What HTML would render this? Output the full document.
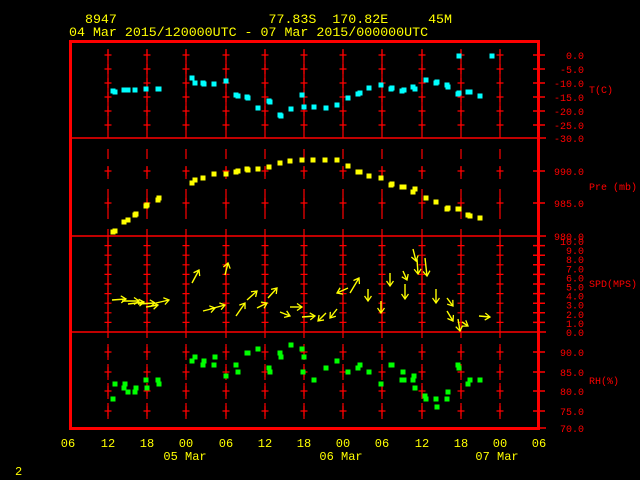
<!DOCTYPE html>
<html><head><style>
html,body{margin:0;padding:0;background:#000;width:640px;height:480px;overflow:hidden}
svg{display:block}
text{font-family:"Liberation Mono",monospace;}
</style></head><body>
<svg width="640" height="480" viewBox="0 0 640 480" xmlns="http://www.w3.org/2000/svg">
<defs>
<path id="c" d="M-3.5 0H3.5M0 -5V5" stroke="#f00" stroke-width="1.2" fill="none"/>
<path id="vcol" stroke="#f00" stroke-width="1.2" fill="none" d="M0 49V138 M0 149V159M0 167V179M0 189V219M0 229V332 M0 332V338M0 344V360M0 364V380M0 383V399M0 403V419"/>
<rect id="pc" x="-2.5" y="-2.5" width="5" height="5" fill="#0ff"/>
<rect id="py" x="-2.5" y="-2.5" width="5" height="5" fill="#ff0"/>
<rect id="pg" x="-2.5" y="-2.5" width="5" height="5" fill="#0f0"/>
<marker id="ah" markerWidth="8" markerHeight="8" refX="6" refY="4" orient="auto" markerUnits="userSpaceOnUse"><path d="M1 0.5L6 4L1 7.5" stroke="#ff0" stroke-width="1.3" fill="none"/></marker>
<g id="crosscol">
<use href="#c" y="55"/><use href="#c" y="69"/><use href="#c" y="83"/><use href="#c" y="97"/><use href="#c" y="111"/><use href="#c" y="125"/>
<use href="#c" y="171"/><use href="#c" y="203"/>
<use href="#c" y="245.6"/><use href="#c" y="255.2"/><use href="#c" y="264.8"/><use href="#c" y="274.4"/><use href="#c" y="284"/><use href="#c" y="293.6"/><use href="#c" y="303.2"/><use href="#c" y="312.8"/><use href="#c" y="322.4"/>
<use href="#c" y="352"/><use href="#c" y="372"/><use href="#c" y="391"/><use href="#c" y="411"/>
</g>
</defs>
<g fill="#ff0" font-size="13.3">
<text x="69" y="23" xml:space="preserve">  8947                   77.83S  170.82E     45M</text>
<text x="69" y="36" xml:space="preserve">04 Mar 2015/120000UTC - 07 Mar 2015/000000UTC</text>
</g>
<g>
<use href="#vcol" x="108"/><use href="#vcol" x="147"/><use href="#vcol" x="186"/><use href="#vcol" x="226"/><use href="#vcol" x="265"/><use href="#vcol" x="304"/><use href="#vcol" x="343"/><use href="#vcol" x="382"/><use href="#vcol" x="422"/><use href="#vcol" x="461"/><use href="#vcol" x="500"/>
</g>
<use href="#crosscol" x="108"/><use href="#crosscol" x="147"/><use href="#crosscol" x="186"/><use href="#crosscol" x="226"/><use href="#crosscol" x="265"/><use href="#crosscol" x="304"/><use href="#crosscol" x="343"/><use href="#crosscol" x="382"/><use href="#crosscol" x="422"/><use href="#crosscol" x="461"/><use href="#crosscol" x="500"/>
<rect x="70.5" y="41.5" width="468" height="387" fill="none" stroke="#f00" stroke-width="3"/>
<g stroke="#f00" stroke-width="1.5">
<line x1="70" y1="138" x2="546" y2="138"/>
<line x1="70" y1="236" x2="546" y2="236"/>
<line x1="70" y1="332" x2="546" y2="332"/>
<line x1="538" y1="428" x2="546" y2="428"/>
<path d="M533 55H545M533 69H545M533 83H545M533 97H545M533 111H545M533 125H545M533 171H545M533 203H545M533 245.6H545M533 255.2H545M533 264.8H545M533 274.4H545M533 284H545M533 293.6H545M533 303.2H545M533 312.8H545M533 322.4H545M533 352H545M533 372H545M533 391H545M533 411H545"/>
</g>
<g fill="#f00" font-size="10" text-anchor="end">
<text x="584" y="59">0.0</text><text x="584" y="73">-5.0</text><text x="584" y="87">-10.0</text><text x="584" y="101">-15.0</text><text x="584" y="115">-20.0</text><text x="584" y="129">-25.0</text><text x="584" y="142">-30.0</text>
<text x="584" y="175">990.0</text><text x="584" y="207">985.0</text><text x="584" y="240">980.0</text>
<text x="584" y="245">10.0</text><text x="584" y="254.1">9.0</text><text x="584" y="263.2">8.0</text><text x="584" y="272.3">7.0</text><text x="584" y="281.4">6.0</text><text x="584" y="290.5">5.0</text><text x="584" y="299.6">4.0</text><text x="584" y="308.7">3.0</text><text x="584" y="317.8">2.0</text><text x="584" y="326.9">1.0</text><text x="584" y="336">0.0</text>
<text x="584" y="356">90.0</text><text x="584" y="376">85.0</text><text x="584" y="395">80.0</text><text x="584" y="415">75.0</text><text x="584" y="432">70.0</text>
</g>
<g fill="#f00" font-size="10">
<text x="589" y="93">T(C)</text><text x="589" y="190">Pre (mb)</text><text x="589" y="287">SPD(MPS)</text><text x="589" y="384">RH(%)</text>
</g>
<g fill="#ff0" font-size="12" text-anchor="middle">
<text x="68" y="447">06</text><text x="108" y="447">12</text><text x="147" y="447">18</text><text x="186" y="447">00</text><text x="226" y="447">06</text><text x="265" y="447">12</text><text x="304" y="447">18</text><text x="343" y="447">00</text><text x="382" y="447">06</text><text x="422" y="447">12</text><text x="461" y="447">18</text><text x="500" y="447">00</text><text x="539" y="447">06</text>
<text x="185" y="460">05 Mar</text><text x="341" y="460">06 Mar</text><text x="497" y="460">07 Mar</text>
</g>
<text x="15" y="475" fill="#ff0" font-size="12">2</text>
<g>
<use href="#pc" x="113" y="91"/><use href="#pc" x="115" y="92"/><use href="#pc" x="124" y="90"/><use href="#pc" x="128" y="90"/><use href="#pc" x="135" y="90"/><use href="#pc" x="146" y="89"/><use href="#pc" x="158" y="89"/><use href="#pc" x="159" y="89"/>
<use href="#pc" x="192" y="78"/><use href="#pc" x="195" y="83"/><use href="#pc" x="203" y="83"/><use href="#pc" x="204" y="84"/><use href="#pc" x="214" y="84"/><use href="#pc" x="226" y="81"/><use href="#pc" x="236" y="95"/><use href="#pc" x="238" y="96"/><use href="#pc" x="247" y="97"/><use href="#pc" x="248" y="98"/><use href="#pc" x="258" y="108"/><use href="#pc" x="269" y="101"/><use href="#pc" x="270" y="102"/><use href="#pc" x="280" y="115"/><use href="#pc" x="281" y="116"/><use href="#pc" x="291" y="109"/><use href="#pc" x="302" y="95"/><use href="#pc" x="304" y="107"/><use href="#pc" x="314" y="107"/><use href="#pc" x="326" y="108"/>
<use href="#pc" x="337" y="105"/><use href="#pc" x="348" y="98"/><use href="#pc" x="358" y="94"/><use href="#pc" x="360" y="93"/><use href="#pc" x="369" y="88"/><use href="#pc" x="381" y="85"/><use href="#pc" x="391" y="89"/><use href="#pc" x="392" y="88"/><use href="#pc" x="402" y="91"/><use href="#pc" x="404" y="90"/><use href="#pc" x="413" y="87"/><use href="#pc" x="415" y="89"/><use href="#pc" x="426" y="80"/><use href="#pc" x="436" y="83"/><use href="#pc" x="437" y="82"/><use href="#pc" x="447" y="85"/><use href="#pc" x="448" y="87"/><use href="#pc" x="458" y="94"/><use href="#pc" x="459" y="93"/><use href="#pc" x="468" y="92"/><use href="#pc" x="470" y="92"/><use href="#pc" x="480" y="96"/><use href="#pc" x="459" y="56"/><use href="#pc" x="492" y="56"/>
</g>
<g>
<use href="#py" x="113" y="232"/><use href="#py" x="115" y="231"/><use href="#py" x="124" y="222"/><use href="#py" x="128" y="220"/><use href="#py" x="135" y="215"/><use href="#py" x="136" y="214"/><use href="#py" x="146" y="206"/><use href="#py" x="147" y="205"/><use href="#py" x="158" y="200"/><use href="#py" x="159" y="198"/>
<use href="#py" x="192" y="183"/><use href="#py" x="195" y="180"/><use href="#py" x="203" y="178"/><use href="#py" x="214" y="174"/><use href="#py" x="226" y="174"/><use href="#py" x="236" y="172"/><use href="#py" x="238" y="171"/><use href="#py" x="247" y="169"/><use href="#py" x="248" y="170"/><use href="#py" x="258" y="169"/><use href="#py" x="269" y="167"/><use href="#py" x="280" y="163"/><use href="#py" x="290" y="161"/><use href="#py" x="302" y="160"/><use href="#py" x="313" y="160"/><use href="#py" x="325" y="160"/>
<use href="#py" x="337" y="160"/><use href="#py" x="348" y="166"/><use href="#py" x="358" y="172"/><use href="#py" x="360" y="172"/><use href="#py" x="369" y="176"/><use href="#py" x="381" y="178"/><use href="#py" x="391" y="185"/><use href="#py" x="392" y="184"/><use href="#py" x="402" y="187"/><use href="#py" x="404" y="187"/><use href="#py" x="413" y="192"/><use href="#py" x="415" y="189"/><use href="#py" x="426" y="198"/><use href="#py" x="436" y="202"/><use href="#py" x="447" y="209"/><use href="#py" x="448" y="208"/><use href="#py" x="458" y="209"/><use href="#py" x="459" y="209"/><use href="#py" x="468" y="215"/><use href="#py" x="470" y="216"/><use href="#py" x="480" y="218"/>
</g>
<g>
<use href="#pg" x="113" y="399"/><use href="#pg" x="115" y="384"/><use href="#pg" x="124" y="388"/><use href="#pg" x="125" y="384"/><use href="#pg" x="128" y="392"/><use href="#pg" x="135" y="392"/><use href="#pg" x="136" y="388"/><use href="#pg" x="146" y="380"/><use href="#pg" x="147" y="388"/><use href="#pg" x="158" y="380"/><use href="#pg" x="159" y="384"/>
<use href="#pg" x="192" y="361"/><use href="#pg" x="195" y="357"/><use href="#pg" x="203" y="365"/><use href="#pg" x="204" y="361"/><use href="#pg" x="214" y="365"/><use href="#pg" x="215" y="357"/><use href="#pg" x="226" y="376"/><use href="#pg" x="236" y="365"/><use href="#pg" x="238" y="372"/><use href="#pg" x="247" y="353"/><use href="#pg" x="248" y="353"/><use href="#pg" x="258" y="349"/><use href="#pg" x="269" y="368"/><use href="#pg" x="270" y="372"/><use href="#pg" x="280" y="353"/><use href="#pg" x="281" y="357"/><use href="#pg" x="291" y="345"/><use href="#pg" x="302" y="349"/><use href="#pg" x="304" y="357"/><use href="#pg" x="303" y="372"/><use href="#pg" x="314" y="380"/>
<use href="#pg" x="326" y="368"/><use href="#pg" x="337" y="361"/><use href="#pg" x="348" y="372"/><use href="#pg" x="358" y="368"/><use href="#pg" x="360" y="365"/><use href="#pg" x="369" y="372"/><use href="#pg" x="381" y="384"/><use href="#pg" x="391" y="365"/><use href="#pg" x="392" y="365"/><use href="#pg" x="403" y="372"/><use href="#pg" x="402" y="380"/><use href="#pg" x="404" y="380"/><use href="#pg" x="413" y="380"/><use href="#pg" x="414" y="376"/><use href="#pg" x="415" y="388"/><use href="#pg" x="425" y="396"/><use href="#pg" x="426" y="399"/><use href="#pg" x="436" y="399"/><use href="#pg" x="437" y="407"/><use href="#pg" x="447" y="399"/><use href="#pg" x="448" y="392"/><use href="#pg" x="458" y="365"/><use href="#pg" x="459" y="368"/><use href="#pg" x="468" y="384"/><use href="#pg" x="470" y="380"/><use href="#pg" x="480" y="380"/>
</g>
<g stroke="#ff0" stroke-width="1.4" fill="none" marker-end="url(#ah)">
<line x1="112" y1="300" x2="126" y2="299"/>
<line x1="122" y1="301" x2="139" y2="301"/>
<line x1="128" y1="304" x2="144" y2="302"/>
<line x1="138" y1="304" x2="155" y2="303"/>
<line x1="146" y1="307" x2="158" y2="305"/>
<line x1="156" y1="303" x2="169" y2="300"/>
<line x1="192" y1="283" x2="199" y2="270"/>
<line x1="225" y1="275" x2="228" y2="263"/>
<line x1="203" y1="311" x2="215" y2="308"/>
<line x1="210" y1="309" x2="225" y2="305"/>
<line x1="236" y1="316" x2="245" y2="303"/>
<line x1="247" y1="300" x2="257" y2="291"/>
<line x1="257" y1="308" x2="267" y2="303"/>
<line x1="268" y1="298" x2="277" y2="288"/>
<line x1="280" y1="312" x2="290" y2="316"/>
<line x1="290" y1="307" x2="302" y2="307"/>
<line x1="302" y1="317" x2="315" y2="316"/>
<line x1="326" y1="313" x2="318" y2="321"/>
<line x1="337" y1="309" x2="330" y2="318"/>
<line x1="348" y1="288" x2="337" y2="293"/>
<line x1="350" y1="293" x2="359" y2="278"/>
<line x1="368" y1="289" x2="368" y2="301"/>
<line x1="381" y1="301" x2="381" y2="313"/>
<line x1="390" y1="273" x2="390" y2="286"/>
<line x1="403" y1="271" x2="407" y2="280"/>
<line x1="405" y1="284" x2="405" y2="299"/>
<line x1="413" y1="249" x2="416" y2="261"/>
<line x1="417" y1="259" x2="418" y2="274"/>
<line x1="425" y1="258" x2="427" y2="276"/>
<line x1="436" y1="289" x2="436" y2="303"/>
<line x1="447" y1="298" x2="453" y2="306"/>
<line x1="447" y1="311" x2="453" y2="321"/>
<line x1="458" y1="319" x2="460" y2="331"/>
<line x1="462" y1="322" x2="468" y2="326"/>
<line x1="479" y1="316" x2="490" y2="317"/>
</g>
</svg>
</body></html>
